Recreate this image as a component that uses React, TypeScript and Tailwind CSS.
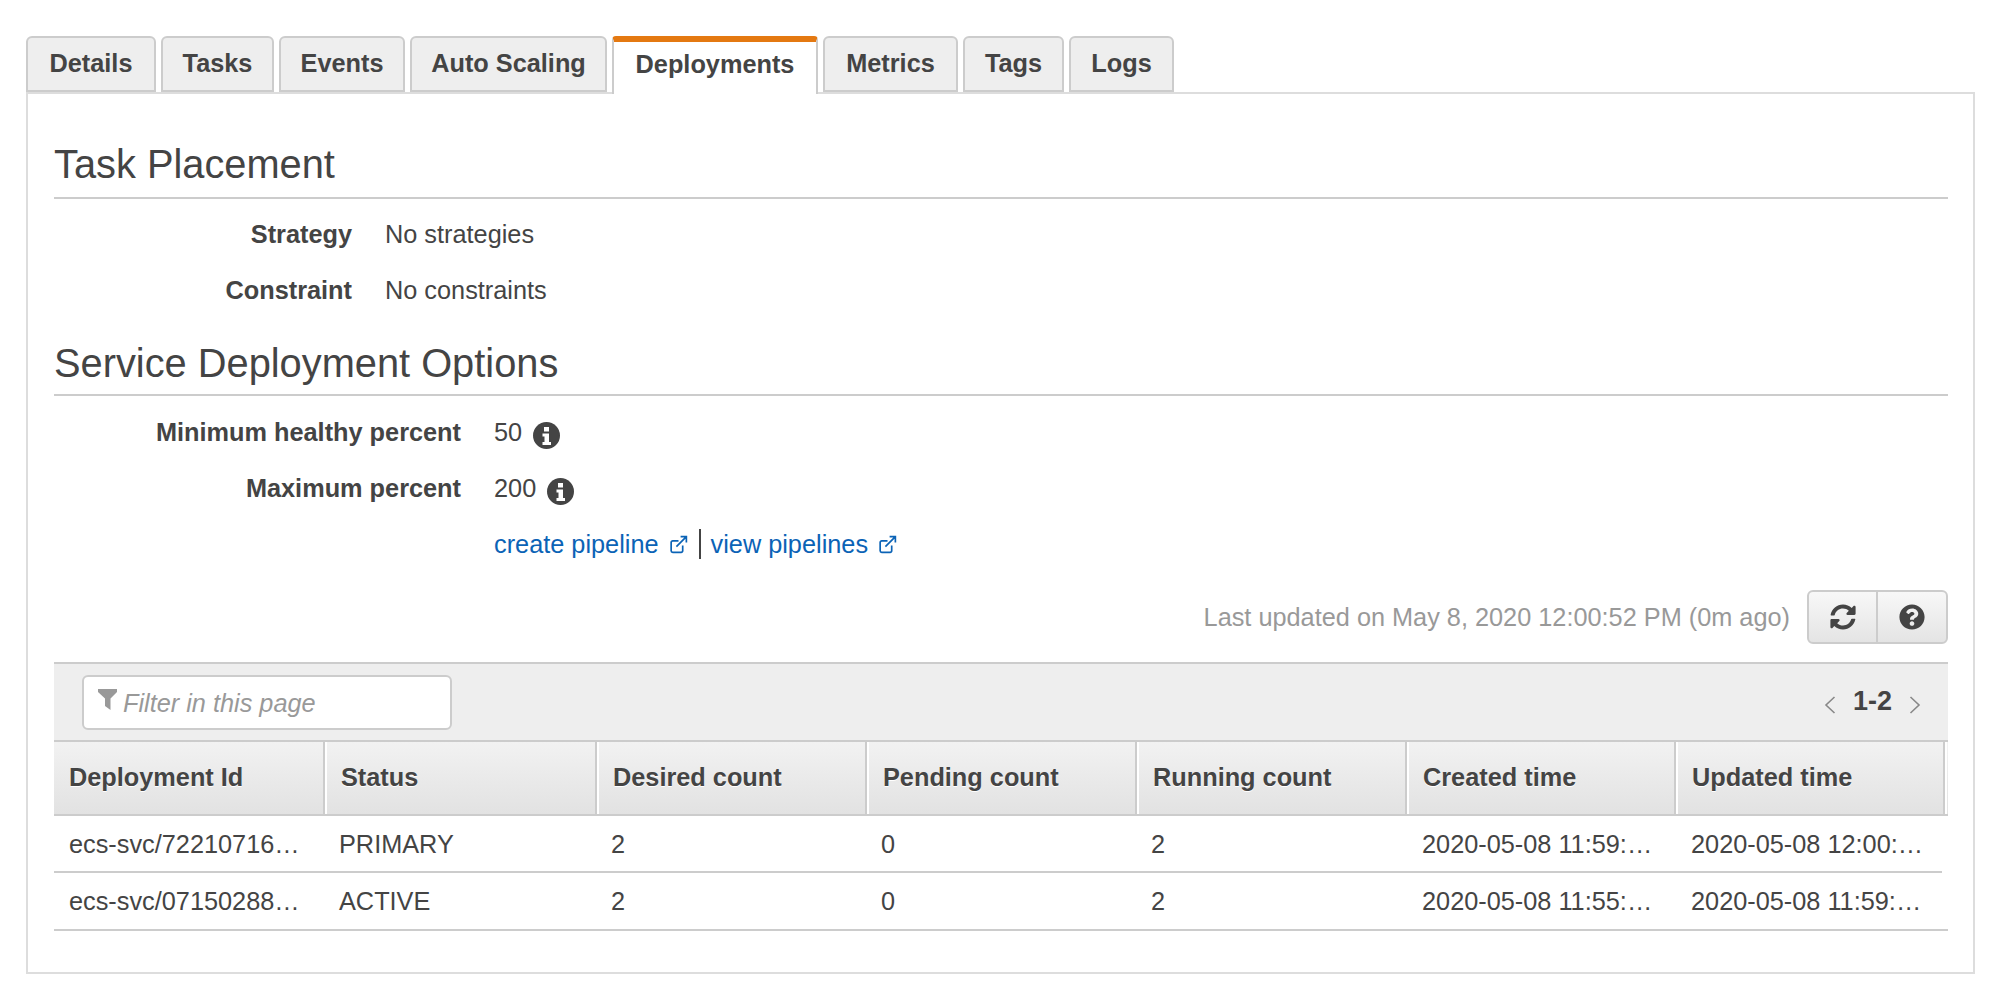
import { FaQuestionCircle, FaSyncAlt } from 'react-icons/fa';

const tabs = [
  { name: 'Details', width: 'w-[130px]' },
  { name: 'Tasks', width: 'w-[113px]' },
  { name: 'Events', width: 'w-[126px]' },
  { name: 'Auto Scaling', width: 'w-[197px]' },
  { name: 'Deployments', width: 'w-[206px]', active: true },
  { name: 'Metrics', width: 'w-[135px]' },
  { name: 'Tags', width: 'w-[101px]' },
  { name: 'Logs', width: 'w-[105px]' },
];

const columns = ['Deployment Id', 'Status', 'Desired count', 'Pending count', 'Running count', 'Created time', 'Updated time'];

const rows = [
  ['ecs-svc/72210716…', 'PRIMARY', '2', '0', '2', '2020-05-08 11:59:…', '2020-05-08 12:00:…'],
  ['ecs-svc/07150288…', 'ACTIVE', '2', '0', '2', '2020-05-08 11:55:…', '2020-05-08 11:59:…'],
];

const headerCols = 'grid grid-cols-[271px_272px_270px_270px_270px_269px_269px]';
const gridCols = 'grid grid-cols-[270px_272px_270px_270px_271px_269px_270px]';

function InfoIcon() {
  return (
    <svg viewBox="0 0 27 27" className="relative top-[3px] ml-[11px] h-[27px] w-[27px]">
      <circle cx="13.5" cy="13.5" r="13.5" fill="#444" />
      <path fill="#fff" d="M11 5h5v4.5h-5zM9.5 11.5H16v8.5h2v3H9.500v-3h2v-5.500h-2z" />
    </svg>
  );
}

function ExternalIcon() {
  return (
    <svg viewBox="0 0 20 20" className="ml-[9px] inline-block h-[21px] w-[21px] fill-none stroke-[#0b63b6] stroke-[1.6]">
      <path d="M14 11v5a1.5 1.5 0 0 1-1.5 1.5h-8A1.5 1.5 0 0 1 3 16V8a1.5 1.5 0 0 1 1.5-1.5H10" />
      <path d="M8 12 17.5 2.5M12 2.5h5.5V8" />
    </svg>
  );
}

function FilterIcon() {
  return (
    <svg viewBox="0 0 19 21" className="-mt-[6px] h-[21px] w-[19px] fill-[#999]">
      <path d="M0 0h19v3l-6.5 6.5V21L7 17V9.5L0 3z" />
    </svg>
  );
}

function Chevron({ left }: { left?: boolean }) {
  return (
    <svg viewBox="0 0 12 20" className="mt-[5px] h-[20px] w-[12px] fill-none stroke-[#888] stroke-[1.6]">
      <path d={left ? 'M10.5 2 2 10l8.5 8' : 'M1.5 2 10 10l-8.5 8'} />
    </svg>
  );
}

function SectionTitle({ children, className }: { children: string; className: string }) {
  return (
    <h2 className={`border-b-2 border-[#ccc] text-[39.8px] leading-[44px] text-[#444] ${className}`}>{children}</h2>
  );
}

function Field({ label, value, labelWidth, info }: { label: string; value: string; labelWidth: string; info?: boolean }) {
  return (
    <div className="flex h-[56px] items-center">
      <div className={`pr-[33px] text-right font-bold text-[#444] ${labelWidth}`}>{label}</div>
      <div className="flex items-center text-[#444]">
        {value}
        {info && <InfoIcon />}
      </div>
    </div>
  );
}

export default function App() {
  return (
    <div className="h-[984px] overflow-hidden bg-white pl-[26px] pr-[25px] pt-[36px] font-['Liberation_Sans',Arial,sans-serif] text-[25.3px] leading-[32px]">
      {/* タブ */}
      <div className="relative z-10 flex h-[58px] gap-[5px]">
        {tabs.map((tab) => (
          <div
            key={tab.name}
            className={
              tab.active
                ? `flex h-[58px] ${tab.width} items-center justify-center rounded-t-[4px] border-x-2 border-t-[6px] border-x-[#ccc] border-t-[#e47911] bg-white pb-[9px] font-bold text-[#444]`
                : `flex h-[56px] ${tab.width} items-center justify-center rounded-t-[6px] border-2 border-[#ccc] bg-[#eee] pb-[2px] font-bold text-[#444]`
            }
          >
            {tab.name}
          </div>
        ))}
      </div>

      {/* パネル */}
      <div className="-mt-[2px] h-[882px] border-2 border-[#ddd] pl-[26px] pr-[25px]">
        <SectionTitle className="h-[105px] pt-[48px]">Task Placement</SectionTitle>
        <div className="pt-[7px]">
          <Field label="Strategy" value="No strategies" labelWidth="w-[331px]" />
          <Field label="Constraint" value="No constraints" labelWidth="w-[331px]" />
        </div>
        <SectionTitle className="mt-[23px] h-[55px]">Service Deployment Options</SectionTitle>
        <div className="pt-[8px]">
          <Field label="Minimum healthy percent" value="50" labelWidth="w-[440px]" info />
          <Field label="Maximum percent" value="200" labelWidth="w-[440px]" info />
          <div className="flex h-[56px] items-center pl-[440px] text-[#0b63b6]">
            create pipeline
            <ExternalIcon />
            <span className="mx-[10px] h-[30px] w-[2px] bg-[#444]" />
            view pipelines
            <ExternalIcon />
          </div>
        </div>

        {/* 更新情報 */}
        <div className="mt-[18px] flex h-[54px] items-center justify-end">
          <span className="mr-[17px] text-[#999]">Last updated on May 8, 2020 12:00:52 PM (0m ago)</span>
          <div className="flex h-[54px] w-[141px] rounded-[6px] border-2 border-[#ccc] bg-gradient-to-b from-[#f8f8f8] to-[#e4e4e4] text-[#444]">
            <div className="flex w-[69px] items-center justify-center border-r-2 border-[#ccc]">
              <FaSyncAlt className="text-[26px]" />
            </div>
            <div className="flex flex-1 items-center justify-center">
              <FaQuestionCircle className="text-[26px]" />
            </div>
          </div>
        </div>

        {/* ツールバー */}
        <div className="mt-[18px] flex h-[78px] items-center justify-between border-t-2 border-[#ccc] bg-[#eee] pl-[28px] pr-[27px]">
          <div className="flex h-[55px] w-[370px] items-center rounded-[6px] border-2 border-[#ccc] bg-white pl-[14px] pt-[1px] italic text-[#999]">
            <FilterIcon />
            <span className="ml-[6px]">Filter in this page</span>
          </div>
          <div className="flex items-center text-[#444]">
            <Chevron left />
            <span className="mx-[17px] -mt-[2px] text-[27px] font-bold">1-2</span>
            <Chevron />
          </div>
        </div>

        {/* テーブル */}
        <div className={`${headerCols} h-[76px] border-y-2 border-[#ccc] bg-gradient-to-b from-[#f2f2f2] to-[#e2e2e2]`}>
          {columns.map((col) => (
            <div
              key={col}
              className="flex items-center border-r-2 border-r-[#ccc] pb-[2px] pl-[16px] font-bold text-[#444] shadow-[2px_0_0_0_#fff] first:pl-[15px] [text-shadow:0_1px_0_#fff]"
            >
              {col}
            </div>
          ))}
        </div>
        {rows.map((row, r) => (
          <div key={row[0]} className={`${gridCols} ${r === 0 ? 'h-[57px] w-[1888px]' : 'h-[58px]'} border-b-2 border-[#ccc] text-[#444]`}>
            {row.map((cell, i) => (
              <div key={i} className="flex items-center whitespace-nowrap pl-[15px]">
                {cell}
              </div>
            ))}
          </div>
        ))}
      </div>
    </div>
  );
}
